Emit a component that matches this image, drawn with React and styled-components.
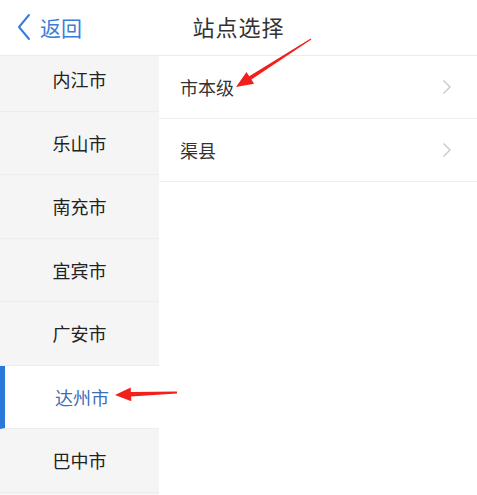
import React from "react";
import styled, { createGlobalStyle } from "styled-components";

const cities = ["内江市", "乐山市", "南充市", "宜宾市", "广安市", "达州市", "巴中市"];
const sites = ["市本级", "渠县"];
const activeCity = "达州市";

// Build a tapered arrow (thin tail, pointed head) as polygon points
const arrowPoints = (tx, ty, hx, hy, headLen, headW, tailW, neckW) => {
  const dx = hx - tx;
  const dy = hy - ty;
  const len = Math.hypot(dx, dy);
  const ux = dx / len;
  const uy = dy / len;
  const nx = -uy;
  const ny = ux;
  const bx = hx - ux * headLen;
  const by = hy - uy * headLen;
  const pts = [
    [tx + nx * tailW / 2, ty + ny * tailW / 2],
    [bx + nx * neckW / 2, by + ny * neckW / 2],
    [bx + nx * headW / 2, by + ny * headW / 2],
    [hx, hy],
    [bx - nx * headW / 2, by - ny * headW / 2],
    [bx - nx * neckW / 2, by - ny * neckW / 2],
    [tx - nx * tailW / 2, ty - ny * tailW / 2],
  ];
  return pts.map((p) => p.map((v) => v.toFixed(1)).join(",")).join(" ");
};

const App = () => {
  return (
    <>
      <GlobalStyle />
      <Page>
        <Header>
          <BackButton>
            <svg width="16" height="28" viewBox="0 0 16 28">
              <polyline points="13,2 3,14 13,26" fill="none" stroke="#3b7dd8" strokeWidth="2" strokeLinecap="round" strokeLinejoin="round" />
            </svg>
            <span>返回</span>
          </BackButton>
          <Title>站点选择</Title>
        </Header>

        <Body>
          <Sidebar>
            <CityList>
              {cities.map((c) => (
                <CityItem key={c} $active={c === activeCity}>
                  {c}
                </CityItem>
              ))}
            </CityList>
          </Sidebar>

          <SiteList>
            {sites.map((s) => (
              <SiteItem key={s}>
                <span>{s}</span>
                <svg width="10" height="16" viewBox="0 0 10 16">
                  <polyline points="1.5,1.5 8,8 1.5,14.5" fill="none" stroke="#c8c8c8" strokeWidth="1.4" />
                </svg>
              </SiteItem>
            ))}
          </SiteList>
        </Body>

        <Annotations width="477" height="495" viewBox="0 0 477 495">
          <polygon points={arrowPoints(311, 39, 236, 87, 17, 14, 1.2, 4)} fill="#f2201c" />
          <polygon points={arrowPoints(177, 392.5, 115, 395, 16, 14, 1.8, 4.5)} fill="#f2201c" />
        </Annotations>
      </Page>
    </>
  );
};

const GlobalStyle = createGlobalStyle`
  html, body {
    margin: 0;
    padding: 0;
    background: #ffffff;
  }
  body {
    font-family: "Noto Sans CJK SC", "Noto Sans", sans-serif;
  }
`;

const Page = styled.div`
  position: relative;
  width: 477px;
  height: 495px;
  overflow: hidden;
  display: flex;
  flex-direction: column;
  background: #ffffff;
`;

const Header = styled.div`
  position: relative;
  z-index: 2;
  flex: 0 0 auto;
  height: 55px;
  border-bottom: 1px solid #ebebeb;
  background: #ffffff;
  display: flex;
  align-items: center;
  justify-content: center;
`;

const BackButton = styled.div`
  position: absolute;
  left: 16px;
  top: 0;
  bottom: 0;
  display: flex;
  align-items: center;
  gap: 8px;
  color: #3b7dd8;
  font-size: 21px;
  padding-bottom: 2px;
`;

const Title = styled.div`
  font-size: 22px;
  color: #333333;
  letter-spacing: 1px;
  padding-bottom: 4px;
`;

const Body = styled.div`
  flex: 1;
  display: flex;
  min-height: 0;
`;

const Sidebar = styled.div`
  width: 159px;
  flex: 0 0 159px;
  background: #f5f5f5;
  overflow: hidden;
`;

const CityList = styled.div`
  margin-top: -8px;
  display: flex;
  flex-direction: column;
`;

const CityItem = styled.div`
  height: 63.5px;
  flex: 0 0 63.5px;
  box-sizing: border-box;
  display: flex;
  align-items: center;
  justify-content: center;
  font-size: 18px;
  border-bottom: 1px solid #ededed;
  color: ${(p) => (p.$active ? "#3d6db8" : "#222222")};
  background: ${(p) => (p.$active ? "#ffffff" : "transparent")};
  border-left: ${(p) => (p.$active ? "5px solid #2a78d8" : "0")};
  padding-top: ${(p) => (p.$active ? "1px" : "0")};
`;

const SiteList = styled.div`
  flex: 1;
  display: flex;
  flex-direction: column;
`;

const SiteItem = styled.div`
  height: 63px;
  box-sizing: border-box;
  border-bottom: 1px solid #efefef;
  display: flex;
  align-items: center;
  justify-content: space-between;
  padding: 0 25px 0 21px;
  font-size: 18px;
  color: #333333;
`;

const Annotations = styled.svg`
  position: absolute;
  left: 0;
  top: 0;
  z-index: 3;
  pointer-events: none;
`;

export default App;
